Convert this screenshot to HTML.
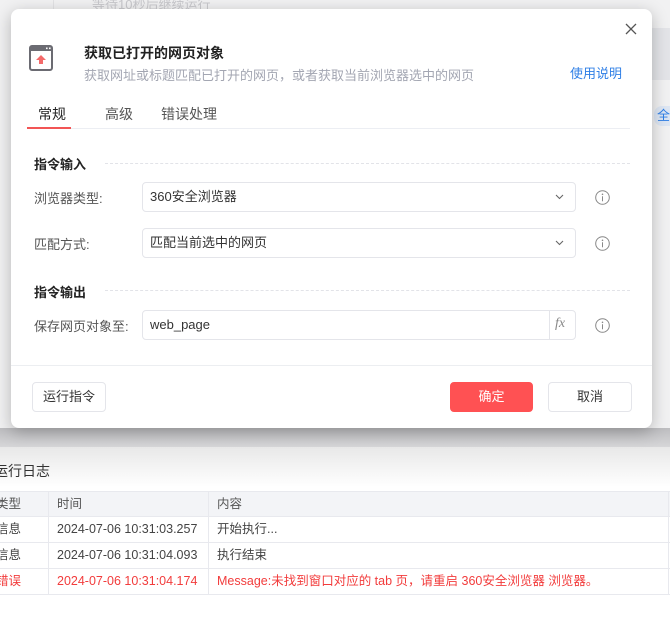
<!DOCTYPE html><html><head><meta charset="utf-8"><style>
*{box-sizing:border-box;margin:0;padding:0}
body{width:670px;height:625px;overflow:hidden;position:relative;background:#fff;font-family:"Liberation Sans","Noto Sans CJK SC",sans-serif;font-size:13px;color:#333}
.a{position:absolute}
.ov{left:0;top:0;width:670px;height:447px;background:#f1f1f2}
.modal{left:11px;top:9px;width:641px;height:419px;background:#fff;border-radius:8px;box-shadow:0 4px 16px rgba(0,0,0,.25)}
.lbl{color:#555;font-size:13px}
.sel{width:434px;height:30px;border:1px solid #e4e5ea;border-radius:4px;line-height:28px;padding-left:7px;color:#333}
.btn{height:30px;border:1px solid #e4e5ea;border-radius:4px;text-align:center;line-height:28px;background:#fff;color:#333}
.dash{height:0;border-top:1px dashed #e2e3e8}
.tr{left:0;width:670px;height:26px;border-bottom:1px solid #e8e9ee;line-height:25px;font-size:12.5px}
.tr span{position:absolute;top:0}
</style></head><body>
<div class="a ov"></div>
<div class="a" style="left:53px;top:0;width:1px;height:447px;background:#e2e2e4"></div>
<div class="a" style="left:92px;top:0;color:#c8c8cc;font-size:13px;line-height:10px">等待10秒后继续运行</div>
<div class="a" style="left:652px;top:28px;width:18px;height:52px;background:#e3e4e8"></div>
<div class="a" style="left:654px;top:106px;width:16px;height:20px;background:#dde6f3;border-radius:8px 0 0 8px;color:#2f7fe6;font-size:13px;line-height:20px;padding-left:3px">全</div>
<div class="a" style="left:0;top:428px;width:670px;height:19px;background:linear-gradient(#bdbdc0,#d6d6d8)"></div>
<div class="a" style="left:0;top:447px;width:670px;height:40px;background:linear-gradient(#e8e8e8,#fff)"></div>

<div class="a modal">
<svg class="a" style="left:614px;top:14px" width="12" height="12" viewBox="0 0 12 12"><path d="M1 1L11 11M11 1L1 11" stroke="#555" stroke-width="1.3"/></svg>
<svg class="a" style="left:18px;top:36px" width="24" height="26" viewBox="0 0 24 26"><rect x="1" y="1" width="22" height="24" rx="2" fill="#fff" stroke="#6b6b72" stroke-width="2"/><rect x="1" y="1" width="22" height="5" fill="#6b6b72"/><rect x="17" y="2.5" width="1.6" height="1.6" fill="#fff"/><rect x="20" y="2.5" width="1.6" height="1.6" fill="#fff"/><path d="M12 10 L17 15 H14 V19 H10 V15 H7 Z" fill="#f46a6a"/></svg>
<div class="a" style="left:73px;top:34px;font-size:14px;font-weight:bold;color:#222">获取已打开的网页对象</div>
<div class="a" style="left:73px;top:56px;font-size:13px;color:#a3a6b2">获取网址或标题匹配已打开的网页，或者获取当前浏览器选中的网页</div>
<div class="a" style="left:559px;top:54px;font-size:13px;color:#2f7fe6">使用说明</div>
<div class="a" style="left:27px;top:95px;font-size:14px;color:#222">常规</div>
<div class="a" style="left:94px;top:95px;font-size:14px;color:#555">高级</div>
<div class="a" style="left:150px;top:95px;font-size:14px;color:#555">错误处理</div>
<div class="a" style="left:16px;top:119px;width:603px;height:1px;background:#eceef3"></div>
<div class="a" style="left:16px;top:118px;width:44px;height:2px;background:#f25555"></div>

<div class="a" style="left:23px;top:145px;font-weight:bold;color:#222">指令输入</div>
<div class="a dash" style="left:94px;top:154px;width:525px"></div>
<div class="a lbl" style="left:23px;top:179px">浏览器类型:</div>
<div class="a sel" style="left:131px;top:173px">360安全浏览器</div>
<svg class="a" style="left:544px;top:185px" width="9" height="6" viewBox="0 0 9 6"><path d="M1 1L4.5 4.5L8 1" fill="none" stroke="#666" stroke-width="1.1"/></svg>
<svg class="a" style="left:584px;top:181px" width="15" height="15" viewBox="0 0 15 15"><circle cx="7.5" cy="7.5" r="6.8" fill="none" stroke="#888" stroke-width="1"/><circle cx="7.5" cy="4.3" r=".8" fill="#888"/><path d="M7.5 6.3V11.3" stroke="#888" stroke-width="1"/></svg>
<div class="a lbl" style="left:23px;top:225px">匹配方式:</div>
<div class="a sel" style="left:131px;top:219px">匹配当前选中的网页</div>
<svg class="a" style="left:544px;top:231px" width="9" height="6" viewBox="0 0 9 6"><path d="M1 1L4.5 4.5L8 1" fill="none" stroke="#666" stroke-width="1.1"/></svg>
<svg class="a" style="left:584px;top:227px" width="15" height="15" viewBox="0 0 15 15"><circle cx="7.5" cy="7.5" r="6.8" fill="none" stroke="#888" stroke-width="1"/><circle cx="7.5" cy="4.3" r=".8" fill="#888"/><path d="M7.5 6.3V11.3" stroke="#888" stroke-width="1"/></svg>
<div class="a" style="left:23px;top:273px;font-weight:bold;color:#222">指令输出</div>
<div class="a dash" style="left:94px;top:281px;width:525px"></div>
<div class="a lbl" style="left:23px;top:307px">保存网页对象至:</div>
<div class="a sel" style="left:131px;top:301px">web_page</div>
<div class="a" style="left:538px;top:302px;width:1px;height:28px;background:#e4e5ea"></div>
<div class="a" style="left:544px;top:307px;color:#888;font-style:italic;font-family:'Liberation Serif',serif;font-size:14px">fx</div>
<svg class="a" style="left:584px;top:309px" width="15" height="15" viewBox="0 0 15 15"><circle cx="7.5" cy="7.5" r="6.8" fill="none" stroke="#888" stroke-width="1"/><circle cx="7.5" cy="4.3" r=".8" fill="#888"/><path d="M7.5 6.3V11.3" stroke="#888" stroke-width="1"/></svg>
<div class="a" style="left:0;top:356px;width:641px;height:1px;background:#eceef1"></div>
<div class="a btn" style="left:21px;top:373px;width:74px">运行指令</div>
<div class="a btn" style="left:439px;top:373px;width:83px;background:#ff5153;border-color:#ff5153;color:#fff">确定</div>
<div class="a btn" style="left:537px;top:373px;width:84px">取消</div>
</div>

<div class="a" style="left:-6px;top:461px;font-size:14px;color:#333">运行日志</div>
<div class="a tr" style="top:491px;background:#f3f4f7;border-top:1px solid #e8e9ee;color:#555"><span style="left:-4px">类型</span><span style="left:57px">时间</span><span style="left:217px">内容</span></div>
<div class="a tr" style="top:517px;color:#444"><span style="left:-4px">信息</span><span style="left:57px">2024-07-06 10:31:03.257</span><span style="left:217px">开始执行...</span></div>
<div class="a tr" style="top:543px;color:#444"><span style="left:-4px">信息</span><span style="left:57px">2024-07-06 10:31:04.093</span><span style="left:217px">执行结束</span></div>
<div class="a tr" style="top:569px;color:#f23c3c"><span style="left:-4px">错误</span><span style="left:57px">2024-07-06 10:31:04.174</span><span style="left:217px">Message:未找到窗口对应的 tab 页，请重启 360安全浏览器 浏览器。</span></div>
<div class="a" style="left:48px;top:491px;width:1px;height:104px;background:#e8e9ee"></div>
<div class="a" style="left:208px;top:491px;width:1px;height:104px;background:#e8e9ee"></div>
<div class="a" style="left:668px;top:491px;width:1px;height:104px;background:#e8e9ee"></div>
</body></html>
